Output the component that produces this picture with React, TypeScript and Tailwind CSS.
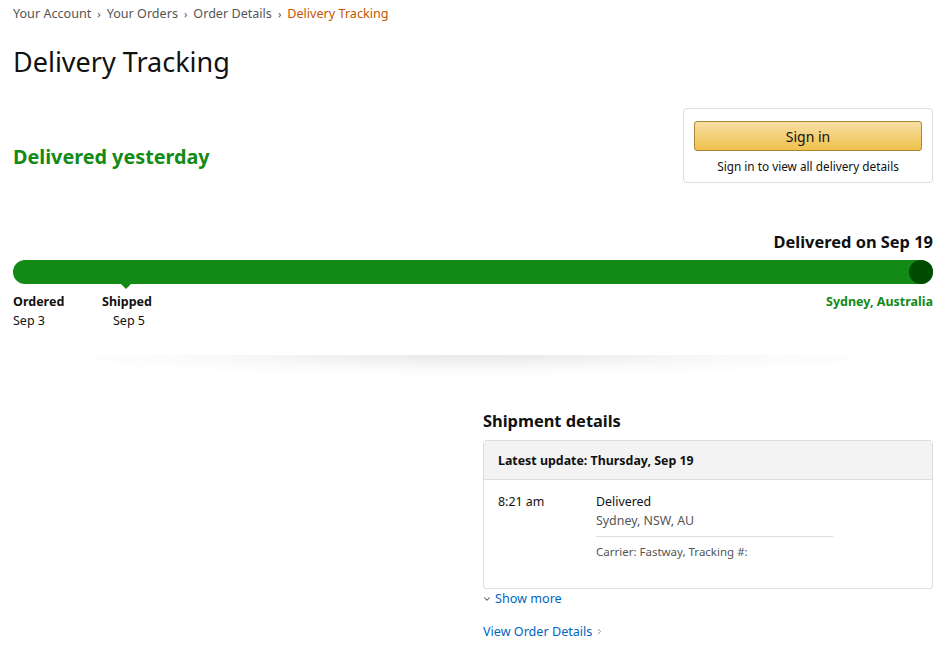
import React from 'react';
import { ChevronDown, ChevronRight } from 'lucide-react';

const Crumb = ({ label, active }: { label: string; active?: boolean }) => (
  <span className={active ? 'text-[#c45500]' : 'text-[#555]'}>{label}</span>
);

const Sep = () => <span className="mx-[6px] text-[#555] text-[11px]">›</span>;

const SignInBox = () => (
  <div className="w-[250px] border border-[#ddd] rounded-[4px] px-[10px] pt-[12px] pb-[7px]">
    <button className="w-full h-[30px] rounded-[3px] border border-[#a88734] bg-[linear-gradient(to_bottom,#f7dfa5,#f0c14b)] text-[14px] text-[#111]">
      Sign in
    </button>
    <div className="text-center text-[11.8px] text-[#111] mt-[6px] leading-[18px]">Sign in to view all delivery details</div>
  </div>
);

const Progress = () => (
  <div>
    <div className="text-right text-[16.4px] font-bold text-[#111] leading-none mb-[10px]">Delivered on Sep 19</div>
    <div className="relative h-[24px] rounded-full bg-[#138a16]">
      <div className="absolute right-0 top-0 w-[24px] h-[24px] rounded-full bg-[#004b00]" />
      <div className="absolute left-[108px] top-[24px] w-0 h-0 border-l-[5px] border-r-[5px] border-t-[5px] border-l-transparent border-r-transparent border-t-[#138a16]" />
    </div>
    <div className="flex items-start mt-[8px] text-[12.5px] leading-[19px] text-[#111]">
      <div className="w-[89px]">
        <div className="font-bold">Ordered</div>
        <div>Sep 3</div>
      </div>
      <div className="w-[60px] text-center -ml-[3px]">
        <div className="font-bold -ml-[4px]">Shipped</div>
        <div>Sep 5</div>
      </div>
      <div className="flex-1 text-right font-bold text-[#138a16]">Sydney, Australia</div>
    </div>
  </div>
);

const ShipmentDetails = () => (
  <div>
    <h2 className="text-[16.4px] font-bold text-[#111] mb-[8px] leading-[22px]">Shipment details</h2>
    <div className="border border-[#ddd] rounded-[3px]">
      <div className="bg-[#f3f3f3] h-[39px] flex items-center px-[14px] border-b border-[#ddd] text-[12.4px] font-bold text-[#111]">
        Latest update: Thursday, Sep 19
      </div>
      <div className="flex px-[14px] pt-[12px] pb-[27px] text-[12.4px]">
        <div className="w-[98px] text-[#111]">8:21 am</div>
        <div className="w-[237px]">
          <div className="text-[#111]">Delivered</div>
          <div className="text-[#555]">Sydney, NSW, AU</div>
          <div className="border-t border-[#ddd] mt-[6px] pt-[5px] text-[11.5px] text-[#555]">Carrier: Fastway, Tracking #:</div>
        </div>
      </div>
    </div>
    <div className="flex items-center text-[12.6px] text-[#0066c0]">
      <ChevronDown size={10} strokeWidth={2.5} className="text-[#555] ml-[-1px] mr-[3px]" />
      Show more
    </div>
    <div className="flex items-center mt-[14px] text-[12.6px] text-[#0066c0]">
      View Order Details
      <ChevronRight size={9} strokeWidth={2.5} className="text-[#888] ml-[3px]" />
    </div>
  </div>
);

export default function App() {
  return (
    <div className="min-h-[660px] bg-white pl-[13px] pr-[18px] pt-[4px] font-['Noto_Sans',sans-serif] leading-[19px]">
      <nav className="text-[12.6px]">
        <Crumb label="Your Account" />
        <Sep />
        <Crumb label="Your Orders" />
        <Sep />
        <Crumb label="Order Details" />
        <Sep />
        <Crumb label="Delivery Tracking" active />
      </nav>
      <h1 className="text-[27px] font-normal text-[#111] mt-[22px] leading-[34px]">Delivery Tracking</h1>
      <div className="flex items-start justify-between mt-[29px]">
        <div className="text-[19.8px] font-bold text-[#138a16] mt-[35px] leading-[28px]">Delivered yesterday</div>
        <SignInBox />
      </div>
      <div className="mt-[51px]">
        <Progress />
      </div>
      <div className="mx-[20px] mt-[25px] h-[22px] bg-[radial-gradient(ellipse_at_top,rgba(0,0,0,0.09),rgba(0,0,0,0.02)_45%,transparent_70%)]" />
      <div className="grid grid-cols-2 gap-[20px] mt-[33px]">
        <div />
        <ShipmentDetails />
      </div>
    </div>
  );
}
